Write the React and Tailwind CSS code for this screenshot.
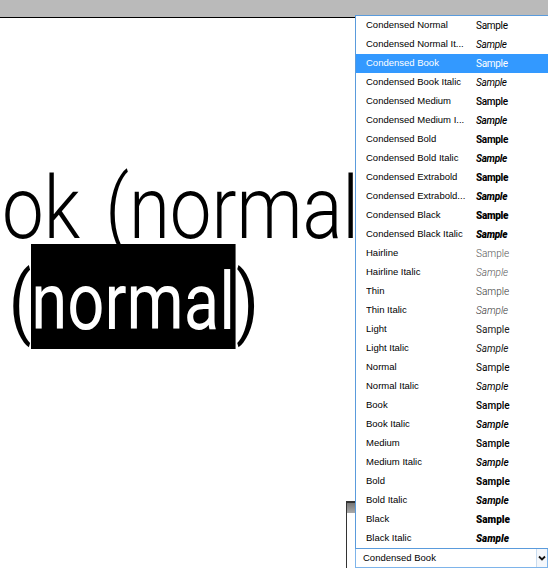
import { useState } from "react";

const ui = { fontFamily: '"Liberation Sans", Arial, sans-serif' };
const sampleFont = { fontFamily: 'Roboto, "Liberation Sans", sans-serif' };
const big = { fontFamily: 'Roboto, "Liberation Sans", sans-serif' };

const styles = [
  ["Condensed Normal", "font-normal tracking-[-0.3px]"],
  ["Condensed Normal It...", "font-normal italic tracking-[-0.3px]"],
  ["Condensed Book", "font-normal tracking-[-0.3px]"],
  ["Condensed Book Italic", "font-normal italic tracking-[-0.3px]"],
  ["Condensed Medium", "font-medium tracking-[-0.3px]"],
  ["Condensed Medium I...", "font-medium italic tracking-[-0.3px]"],
  ["Condensed Bold", "font-bold tracking-[-0.3px]"],
  ["Condensed Bold Italic", "font-bold italic tracking-[-0.3px]"],
  ["Condensed Extrabold", "font-extrabold tracking-[-0.3px]"],
  ["Condensed Extrabold...", "font-extrabold italic tracking-[-0.3px]"],
  ["Condensed Black", "font-black tracking-[-0.3px]"],
  ["Condensed Black Italic", "font-black italic tracking-[-0.3px]"],
  ["Hairline", "font-light text-[#555]"],
  ["Hairline Italic", "font-light italic text-[#555]"],
  ["Thin", "font-light text-[#333]"],
  ["Thin Italic", "font-light italic text-[#333]"],
  ["Light", "font-normal text-[#1a1a1a]"],
  ["Light Italic", "font-normal italic text-[#1a1a1a]"],
  ["Normal", "font-normal text-black"],
  ["Normal Italic", "font-normal italic text-black"],
  ["Book", "font-medium text-black"],
  ["Book Italic", "font-medium italic text-black"],
  ["Medium", "font-medium text-black"],
  ["Medium Italic", "font-medium italic text-black"],
  ["Bold", "font-bold"],
  ["Bold Italic", "font-bold italic"],
  ["Black", "font-black"],
  ["Black Italic", "font-black italic"],
];

function StylePicker() {
  const [selected, setSelected] = useState("Condensed Book");

  return (
    <div className="relative w-[193px]" style={ui}>
      {/* open list */}
      <ul className="absolute bottom-full left-0 w-[196px] border border-[#5a9bdc] bg-white">
        {styles.map(([name, cls]) => {
          const active = name === selected;
          return (
            <li
              key={name}
              onClick={() => setSelected(name)}
              className={
                "flex h-[19px] items-center pl-[10px] text-[9.5px] " +
                (active ? "bg-[#3399ff] text-white" : "text-black")
              }
            >
              <span className="w-[110px] truncate">{name}</span>
              <span className={"text-[10px] " + cls + (active ? " text-white" : "")} style={sampleFont}>
                Sample
              </span>
            </li>
          );
        })}
      </ul>
      <div className="flex h-[19px] items-center border border-t-0 border-[#7eb4ea] bg-white">
        <span className="flex-1 pl-[7px] text-[9.5px] text-black">{selected}</span>
        <div className="flex h-full w-[11px] items-center justify-center border-l border-[#c9dcef] bg-[#f4f7fb]">
          <svg width="8" height="6" viewBox="0 0 8 6">
            <polyline points="1,1.5 4,4.5 7,1.5" fill="none" stroke="#111" strokeWidth="1.8" />
          </svg>
        </div>
      </div>
    </div>
  );
}

export default function App() {
  return (
    <div className="relative flex h-[568px] w-[548px] flex-col overflow-hidden bg-white">
      <div className="h-[18px] shrink-0 border-b border-black bg-[#bababa]" />

      <main className="flex-1 overflow-hidden pt-[155px] text-black" style={big}>
        <div className="h-[71px] whitespace-nowrap pl-[2px]">
          <div className="inline-block origin-left scale-x-[0.855] text-[87px] font-light leading-[71px] [word-spacing:8px]">
            ok (normal)
          </div>
        </div>
        <div className="h-[105px] whitespace-nowrap pl-[9px]">
          <div className="flex origin-left scale-x-[0.815] text-[80px] leading-[117px]">
            <div className="h-[105px]">(</div>
            <div className="h-[105px] bg-black pr-[1px] text-white">normal</div>
            <div className="h-[105px]">)</div>
          </div>
        </div>
      </main>

      {/* panel peeking out behind the picker */}
      <div className="absolute left-[346px] top-[501px] h-[67px] w-[12px] border-l border-t-2 border-[#333] bg-white">
        <div className="h-[10px] bg-gradient-to-b from-[#777] to-[#aaa]" />
      </div>

      <div className="relative flex h-[19px] shrink-0 justify-end">
        <StylePicker />
      </div>
    </div>
  );
}
